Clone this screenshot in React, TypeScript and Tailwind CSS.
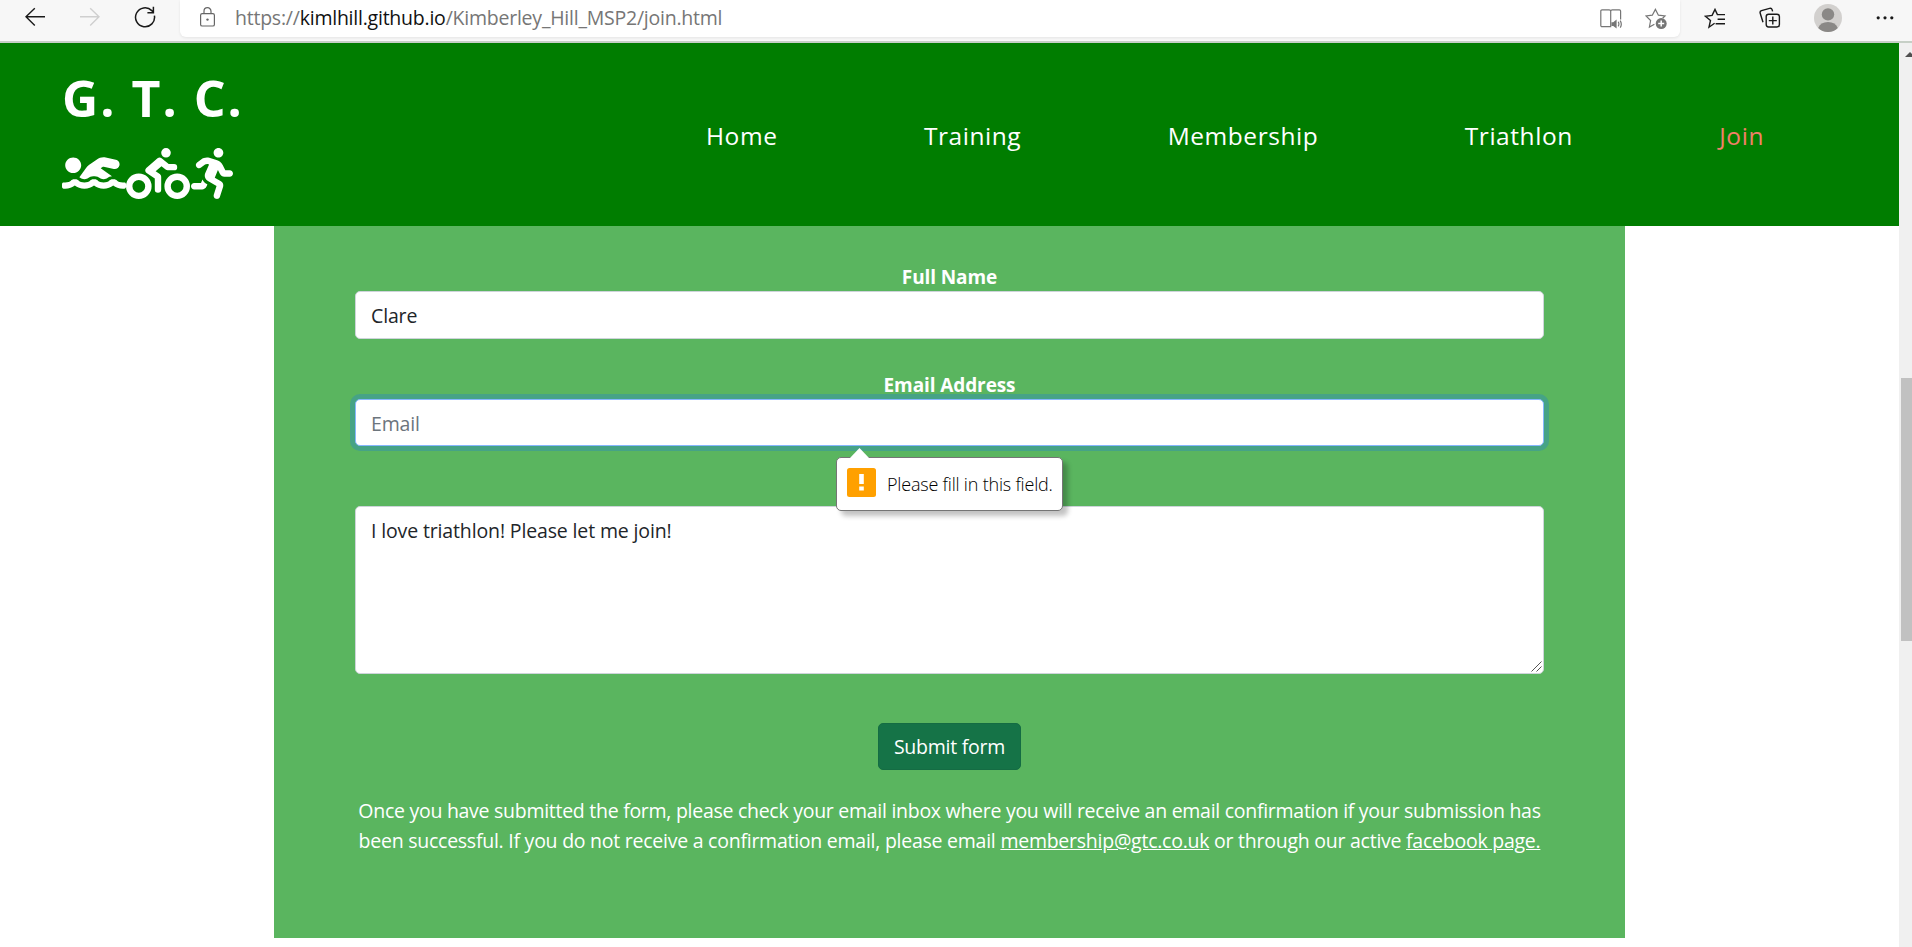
import { FaBiking, FaRunning, FaSwimmer } from "react-icons/fa";

const NAV = [
  { label: "Home", active: false },
  { label: "Training", active: false },
  { label: "Membership", active: false },
  { label: "Triathlon", active: false },
  { label: "Join", active: true },
];

function BrowserBar() {
  return (
    <div className="flex h-[43px] shrink-0 items-start border-b-2 border-[#c6cfc6] bg-[#f7f7f7]">
      <div className="flex h-[34px] w-[180px] shrink-0 items-center pl-[25px] text-[#1a1a1a]">
        <svg className="size-5" viewBox="0 0 20 20" fill="none" stroke="currentColor" strokeWidth="1.4">
          <path d="M20 9.8H1M9.8 1.2L1 9.8l8.8 8.8" />
        </svg>
        <svg className="ml-[35px] size-5 text-[#cfcfcf]" viewBox="0 0 20 20" fill="none" stroke="currentColor" strokeWidth="1.4">
          <path d="M0 9.8h19M10.2 1.2L19 9.8l-8.8 8.8" />
        </svg>
        <svg className="ml-[34px] h-[22px] w-[22px]" viewBox="0 0 22 22" fill="none" stroke="currentColor" strokeWidth="1.5">
          <path d="M20.4 9.6A9.5 9.5 0 1 1 17.8 4.6L19.3 6.4M19.4 .8V6.7H13.4" />
        </svg>
      </div>
      <div className="flex h-[37px] w-[1500px] shrink-0 items-start rounded-b-md bg-white shadow-[0_1px_3px_rgba(0,0,0,0.08)]">
        <svg className="mt-[7px] ml-[19px] h-5 w-[17px] shrink-0 text-[#666]" viewBox="0 0 17 20" fill="none" stroke="currentColor" strokeWidth="1.2">
          <rect x="1.6" y="6.6" width="13.8" height="12.4" rx="1.6" />
          <path d="M5 6.6V4.2a3.5 3.5 0 0 1 7 0v2.4" />
          <circle cx="8.5" cy="12.6" r="1.2" fill="currentColor" stroke="none" />
        </svg>
        <p className="mt-[3px] ml-[19px] text-[19.5px] leading-[30px] tracking-[-0.23px] whitespace-nowrap text-[#767676]">
          https://<span className="text-[#111]">kimlhill.github.io</span>/Kimberley_Hill_MSP2/join.html
        </p>
        <svg className="mt-[8px] mr-[23px] ml-auto h-[22px] w-[22px] shrink-0 text-[#767676]" viewBox="0 0 22 22" fill="none" stroke="currentColor" strokeWidth="1.2">
          <path d="M10.7 18.6H2a1.2 1.2 0 0 1-1.2-1.2V3A1.2 1.2 0 0 1 2 1.8h7.2a1.5 1.5 0 0 1 1.5 1.5zM10.7 18.6V3.3a1.5 1.5 0 0 1 1.5-1.5h7.2A1.2 1.2 0 0 1 20.6 3v8.6" />
          <path d="M11.4 14.2h1.8l3.4-2.6v9l-3.4-2.6h-1.8z" fill="currentColor" stroke="none" />
          <path d="M18.2 13.8q1.4 2.3 0 4.6M20.2 12.6q2.2 3.6 0 7" />
        </svg>
        <svg className="mt-[8px] mr-[13px] h-[22px] w-[22px] shrink-0 text-[#767676]" viewBox="0 0 22 22" fill="none" stroke="currentColor" strokeWidth="1.2">
          <path d="M9.4 16.2L4.4 19l1.2-6.5L1 8l6.3-.8L10.4 1.4l3 5.8L20 8l-2.4 2.3" />
          <circle cx="16.2" cy="15.6" r="5.5" fill="currentColor" stroke="none" />
          <path d="M16.2 12.6v6M13.2 15.6h6" stroke="white" strokeWidth="1.5" />
        </svg>
      </div>
      <div className="flex flex-1 items-center text-[#1a1a1a]">
        <svg className="mt-[6px] ml-[24px] h-[22px] w-[22px]" viewBox="0 0 22 22" fill="none" stroke="currentColor" strokeWidth="1.4">
          <path d="M10.6 15.2L5 19.2l1.5-6.7L1.4 8.2l6.7-.8L11 1.4l2.4 5.2H21M13.6 11.2H21M11.6 15.7H21" />
        </svg>
        <svg className="mt-[4px] ml-[33px] h-[22px] w-[22px]" viewBox="0 0 22 22" fill="none" stroke="currentColor" strokeWidth="1.4">
          <path d="M4 15.2L1.2 6.2a2 2 0 0 1 1.3-2.5L10.6 1.3a2 2 0 0 1 2.5 1.3L13.6 4.4" />
          <rect x="7.2" y="7.2" width="13.2" height="12.8" rx="2.4" />
          <path d="M13.8 9.6v8M9.8 13.6h8" />
        </svg>
        <svg className="mt-1 ml-[33px] size-7" viewBox="0 0 28 28">
          <circle cx="14" cy="14" r="14" fill="#d2d0ce" />
          <circle cx="14" cy="10.4" r="6.2" fill="#8a8886" />
          <path d="M4.2 24Q6.4 18 14 18t9.8 6A14 14 0 0 1 4.2 24z" fill="#8a8886" />
        </svg>
        <svg className="mt-[3px] ml-[34px] h-4 w-[18px]" viewBox="0 0 18 16" fill="currentColor">
          <circle cx="2.2" cy="7.8" r="1.6" />
          <circle cx="9" cy="7.8" r="1.6" />
          <circle cx="15.8" cy="7.8" r="1.6" />
        </svg>
      </div>
    </div>
  );
}

function SiteHeader() {
  return (
    <header className="flex h-[183px] shrink-0 items-start bg-[#007d00] text-white">
      <div className="w-[706px] shrink-0 pl-[62px]">
        <p className="mt-[25px] h-[61px] text-[50px] leading-[60px] font-bold tracking-[2px] whitespace-nowrap">G. T. C.</p>
        <div className="mt-[19px] flex h-[50px]">
          <FaSwimmer className="h-[50px] w-[64px]" preserveAspectRatio="none" />
          <FaBiking className="h-[51px] w-[64px]" preserveAspectRatio="none" />
          <FaRunning className="ml-[1px] h-[51px] w-[42px]" preserveAspectRatio="none" />
        </div>
      </div>
      <nav className="flex w-[1058px] justify-between pt-[76px] text-[24.5px] leading-[34px] tracking-[0.55px] whitespace-nowrap">
        {NAV.map((item) => (
          <a key={item.label} className={item.active ? "text-[#f08068]" : "text-white"}>
            {item.label}
          </a>
        ))}
      </nav>
    </header>
  );
}

function ValidationBubble() {
  return (
    <div className="absolute top-[58px] left-[481px] z-10 flex h-[54px] w-[227px] items-center rounded-[5px] border border-[#757575] bg-white pl-[10px] shadow-[5px_5px_5px_rgba(0,0,0,0.24)]">
      <svg className="absolute -top-[10px] left-[12px] h-[11px] w-[21px]" viewBox="0 0 21 11">
        <path d="M0 11L10.5 0L21 11z" fill="white" />
      </svg>
      <svg className="mb-[3px] size-[29px]" viewBox="0 0 29 29">
        <rect width="29" height="29" rx="2.5" fill="#ffa000" />
        <path d="M12.2 6h4.6v10h-4.6zM12.2 18.4h4.6v4h-4.6z" fill="white" />
      </svg>
      <p className="ml-[11px] text-[18px] leading-6 font-light tracking-[-0.2px] whitespace-nowrap text-black">
        Please fill in this field.
      </p>
    </div>
  );
}

const FIELD =
  "block w-full rounded-[5px] border bg-white px-[15px] text-[19.5px] leading-[30px] tracking-[-0.14px] text-[#212529] outline-none";

function JoinForm() {
  return (
    <section className="ml-[274px] h-[712px] w-[1351px] shrink-0 bg-[#5ab55f] px-[81px] pt-[35px] text-center text-white">
      <label className="block h-[30px] pt-px text-[19px] leading-[30px] font-bold tracking-[-0.1px]">Full Name</label>
      <input className={`${FIELD} h-[48px] border-[#ced4da] pt-px`} type="text" defaultValue="Clare" />
      <label className="mt-[30px] block h-[30px] pt-px text-[19px] leading-[30px] font-bold tracking-[-0.1px]">Email Address</label>
      <div className="relative">
        <input
          className={`${FIELD} h-[47px] border-[#86b7fe] pt-[2px] shadow-[0_0_0_5px_rgba(13,110,253,0.25)] placeholder:text-[#6c757d]`}
          type="email"
          placeholder="Email"
        />
        <ValidationBubble />
      </div>
      <div className="relative mt-[60px]">
        <textarea
          className={`${FIELD} h-[168px] resize-none border-[#ced4da] pt-[9px]`}
          defaultValue="I love triathlon! Please let me join!"
        />
        <svg className="absolute right-[2px] bottom-[2px] size-[11px]" viewBox="0 0 11 11" fill="none" stroke="#555" strokeWidth="1">
          <path d="M.5 10.5L10.5 .5M5.5 10.5L10.5 5.5" />
        </svg>
      </div>
      <button className="mt-[49px] h-[47px] w-[143px] rounded-[5px] border border-[#146c43] bg-[#157347] pt-px text-[19.5px] leading-[30px] tracking-[-0.25px]" type="submit">
        Submit form
      </button>
      <p className="mt-[26px] text-[19.5px] leading-[30px] tracking-[-0.275px] whitespace-nowrap">
        Once you have submitted the form, please check your email inbox where you will receive an email confirmation if your submission has
        <br />
        <span className="tracking-[-0.25px]">
          been successful. If you do not receive a confirmation email, please email{" "}
          <a className="underline">membership@gtc.co.uk</a> or through our active <a className="underline">facebook page.</a>
        </span>
      </p>
    </section>
  );
}

export default function App() {
  return (
    <div className="flex h-[947px] w-[1912px] flex-col overflow-hidden bg-white font-['Open_Sans','Noto_Sans',sans-serif]">
      <BrowserBar />
      <div className="flex min-h-0 flex-1">
        <main className="flex w-[1899px] shrink-0 flex-col">
          <SiteHeader />
          <JoinForm />
        </main>
        <aside className="flex w-[13px] shrink-0 flex-col bg-[#f0f0f0] pl-[2px]">
          <svg className="mt-[8px] ml-[4px] h-[6px] w-[7px]" viewBox="0 0 7 6">
            <path d="M0 6L5 1L10 6z" fill="#505050" />
          </svg>
          <div className="mt-[321px] h-[263px] bg-[#c1c1c1]" />
        </aside>
      </div>
    </div>
  );
}
